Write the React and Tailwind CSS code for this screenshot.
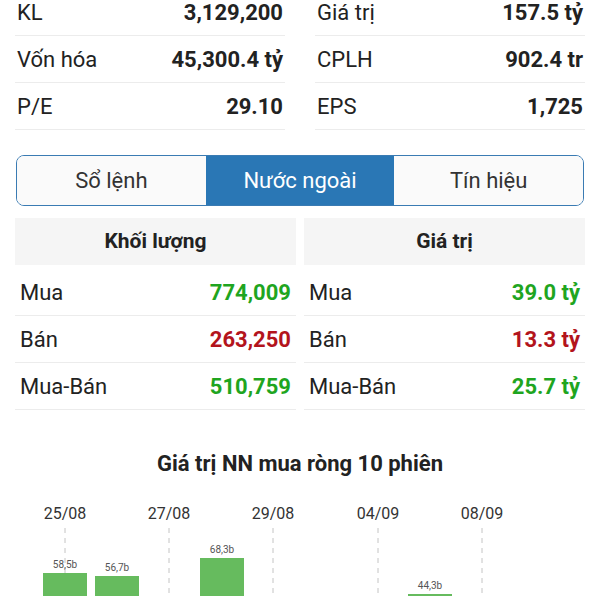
import React from "react";

const stats = [
  [["KL", "3,129,200"], ["Giá trị", "157.5 tỷ"]],
  [["Vốn hóa", "45,300.4 tỷ"], ["CPLH", "902.4 tr"]],
  [["P/E", "29.10"], ["EPS", "1,725"]],
];

const vol = [
  ["Mua", "774,009", "text-[#1fa51f]"],
  ["Bán", "263,250", "text-[#b3141c]"],
  ["Mua-Bán", "510,759", "text-[#1fa51f]"],
];
const val = [
  ["Mua", "39.0 tỷ", "text-[#1fa51f]"],
  ["Bán", "13.3 tỷ", "text-[#b3141c]"],
  ["Mua-Bán", "25.7 tỷ", "text-[#1fa51f]"],
];

function StatCol({ idx }) {
  return (
    <div className="flex flex-col">
      {stats.map((r, i) => (
        <div
          key={i}
          className="h-[47px] flex items-center justify-between border-b border-[#ececec] px-[2px]"
        >
          <span className="text-[22px] text-[#222]">{r[idx][0]}</span>
          <span className="text-[22px] font-bold text-[#222]">{r[idx][1]}</span>
        </div>
      ))}
    </div>
  );
}

function Table({ title, rows }) {
  return (
    <div className="flex flex-col">
      <div className="h-[47px] bg-[#f5f5f5] flex items-center justify-center text-[21px] font-bold text-[#222]">
        {title}
      </div>
      <div className="h-[4px]" />
      {rows.map((r, i) => (
        <div
          key={i}
          className="h-[47px] flex items-center justify-between border-b border-[#ececec] px-[5px]"
        >
          <span className="text-[22px] text-[#222]">{r[0]}</span>
          <span className={"text-[22px] font-bold " + r[2]}>{r[1]}</span>
        </div>
      ))}
    </div>
  );
}

function Chart() {
  const dates = [
    [65, "25/08"],
    [169, "27/08"],
    [273, "29/08"],
    [378, "04/09"],
    [482, "08/09"],
  ];
  const bars = [
    [65, 97, "58,5b"],
    [117, 100, "56,7b"],
    [222, 82, "68,3b"],
    [430, 118, "44,3b"],
  ];
  return (
    <svg width="600" height="120" className="block">
      {dates.map(([x, t]) => (
        <g key={t}>
          <text
            x={x}
            y="43"
            textAnchor="middle"
            fontSize="16"
            fill="#333"
            fontFamily="Roboto, sans-serif"
          >
            {t}
          </text>
          <line
            x1={x}
            x2={x}
            y1="52"
            y2="120"
            stroke="#c4c4c4"
            strokeWidth="1"
            strokeDasharray="5 5"
          />
        </g>
      ))}
      {bars.map(([cx, top, label]) => (
        <g key={label}>
          <rect x={cx - 22} y={top} width="44" height={120 - top} fill="#66bb5e" />
          <text
            x={cx}
            y={top - 5}
            textAnchor="middle"
            fontSize="10"
            fill="#555"
            fontFamily="Roboto, sans-serif"
          >
            {label}
          </text>
        </g>
      ))}
    </svg>
  );
}

export default function App() {
  return (
    <div className="w-[600px] h-[600px] overflow-hidden bg-white font-['Roboto',sans-serif] text-[#222]">
      <div className="-mt-[11px] grid grid-cols-2 gap-x-[30px] px-[15px]">
        <StatCol idx={0} />
        <StatCol idx={1} />
      </div>

      <div className="mt-[25px] mx-[16px] h-[51px] flex border border-[#3a7bb3] rounded-[8px] overflow-hidden">
        <div className="flex-1 flex items-center justify-center bg-[#fafafa] text-[22px] text-[#333]">
          Sổ lệnh
        </div>
        <div className="flex-1 flex items-center justify-center bg-[#2a77b5] text-[22px] text-white">
          Nước ngoài
        </div>
        <div className="flex-1 flex items-center justify-center bg-[#fafafa] text-[22px] text-[#333]">
          Tín hiệu
        </div>
      </div>

      <div className="mt-[12px] px-[15px] grid grid-cols-2 gap-[8px]">
        <Table title="Khối lượng" rows={vol} />
        <Table title="Giá trị" rows={val} />
      </div>

      <div className="mt-[42px] text-center text-[22px] leading-[24px] font-bold text-[#222]">
        Giá trị NN mua ròng 10 phiên
      </div>
      <Chart />
    </div>
  );
}
